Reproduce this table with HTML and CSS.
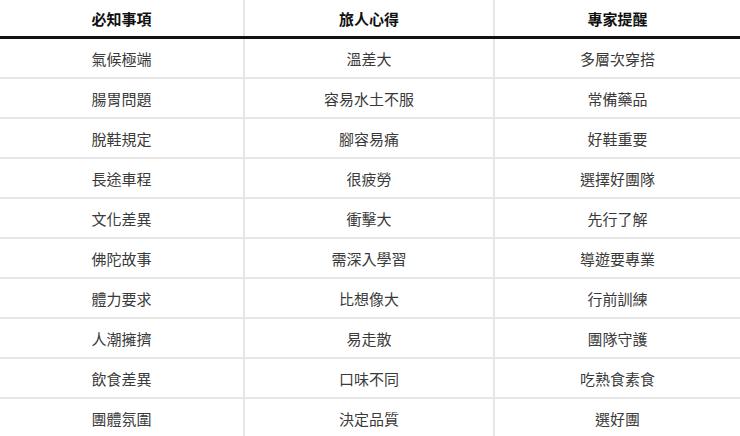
FILE: index.html
```html
<!DOCTYPE html>
<html lang="zh-Hant">
<head>
<meta charset="utf-8">
<link rel="stylesheet" href="styles.css">
</head>
<body>
<table class="tips">
  <colgroup>
    <col class="c1"><col class="c2"><col class="c3">
  </colgroup>
  <thead>
    <tr><th>必知事項</th><th>旅人心得</th><th>專家提醒</th></tr>
  </thead>
  <tbody>
    <tr><td>氣候極端</td><td>溫差大</td><td>多層次穿搭</td></tr>
    <tr><td>腸胃問題</td><td>容易水土不服</td><td>常備藥品</td></tr>
    <tr><td>脫鞋規定</td><td>腳容易痛</td><td>好鞋重要</td></tr>
    <tr><td>長途車程</td><td>很疲勞</td><td>選擇好團隊</td></tr>
    <tr><td>文化差異</td><td>衝擊大</td><td>先行了解</td></tr>
    <tr><td>佛陀故事</td><td>需深入學習</td><td>導遊要專業</td></tr>
    <tr><td>體力要求</td><td>比想像大</td><td>行前訓練</td></tr>
    <tr><td>人潮擁擠</td><td>易走散</td><td>團隊守護</td></tr>
    <tr><td>飲食差異</td><td>口味不同</td><td>吃熟食素食</td></tr>
    <tr><td>團體氛圍</td><td>決定品質</td><td>選好團</td></tr>
  </tbody>
</table>
</body>
</html>
```
FILE: styles.css
```css
html, body {
  margin: 0;
  padding: 0;
  background: #ffffff;
}
.tips {
  width: 740px;
  border-collapse: collapse;
  table-layout: fixed;
  font-family: "Liberation Serif", "Noto Sans CJK TC", serif;
  font-size: 15px;
  color: #3a3a3a;
}
.tips .c1 { width: 244px; }
.tips .c2 { width: 250px; }
.tips .c3 { width: 246px; }
.tips th, .tips td {
  text-align: center;
  padding: 0;
  border-left: 2px solid #e6e6e6;
}
.tips th:first-child, .tips td:first-child { border-left: none; }
.tips th {
  height: 36px;
  font-weight: bold;
  color: #111111;
  border-bottom: 3px solid #111111;
}
.tips td {
  height: 38px;
  border-bottom: 2px solid #e6e6e6;
}
.tips tbody tr:last-child td { border-bottom: none; }
```
